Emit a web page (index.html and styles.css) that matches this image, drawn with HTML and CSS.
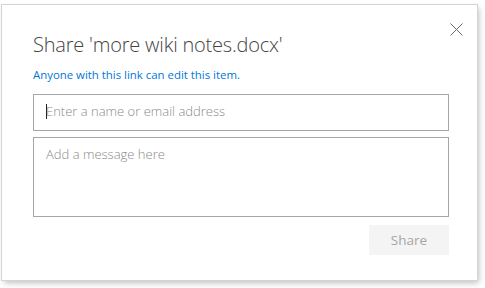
FILE: index.html
```html
<!DOCTYPE html>
<html lang="en">
<head>
    <meta charset="UTF-8">
    <title>Share</title>
    <link rel="stylesheet" href="styles.css">
</head>
<body>

<div class="dialog">
    <button class="close-button" aria-label="Close">
        <svg width="13" height="13" viewBox="0 0 13 13">
            <path d="M0.5 0.5 L12.5 12.5 M12.5 0.5 L0.5 12.5" stroke="#666" stroke-width="1" fill="none"/>
        </svg>
    </button>
    <div class="dialog-title">Share 'more wiki notes.docx'</div>
    <div class="link-info">Anyone with this link can edit this item.</div>
    <div class="name-input">
        <span class="caret"></span>
        <span class="placeholder">Enter a name or email address</span>
    </div>
    <div class="message-input">
        <span class="placeholder">Add a message here</span>
    </div>
    <div class="actions">
        <button class="share-button">Share</button>
    </div>
</div>

</body>
</html>
```

FILE: styles.css
```css
body {
    font-family: "Open Sans", sans-serif;
    background-color: #ffffff;
    margin: 0;
    width: 485px;
    height: 288px;
    overflow: hidden;
}

.dialog {
    position: relative;
    box-sizing: border-box;
    width: 475px;
    height: 275px;
    margin: 5px 0 0 2px;
    padding: 26px 28px 0 31px;
    background-color: white;
    box-shadow: 0 0 0 1px #d4d4d4, 2px 3px 6px rgba(0, 0, 0, 0.25);
}

.close-button {
    position: absolute;
    top: 18px;
    right: 14px;
    padding: 0;
    border: none;
    background: none;
    cursor: pointer;
}

.dialog-title {
    font-size: 20px;
    font-weight: 300;
    color: #444;
    line-height: 28px;
    letter-spacing: -0.2px;
}

.link-info {
    margin-top: 9px;
    font-size: 11.4px;
    color: #0078d7;
    line-height: 14px;
}

.name-input,
.message-input {
    box-sizing: border-box;
    border: 1px solid #a6a6a6;
    font-size: 13px;
    color: #8a8a8a;
    font-weight: 300;
}

.name-input {
    margin-top: 12px;
    height: 37px;
    padding: 0 12px 3px;
    display: flex;
    align-items: center;
}

.caret {
    width: 1px;
    height: 15px;
    background-color: #222;
    margin-right: -1px;
}

.message-input {
    margin-top: 6px;
    height: 80px;
    padding: 7px 12px;
}

.actions {
    display: flex;
    justify-content: flex-end;
    margin-top: 8px;
}

.share-button {
    width: 80px;
    height: 30px;
    border: none;
    background-color: #f4f4f4;
    color: #a6a6a6;
    font-family: "Open Sans", sans-serif;
    font-size: 13.5px;
}
```
